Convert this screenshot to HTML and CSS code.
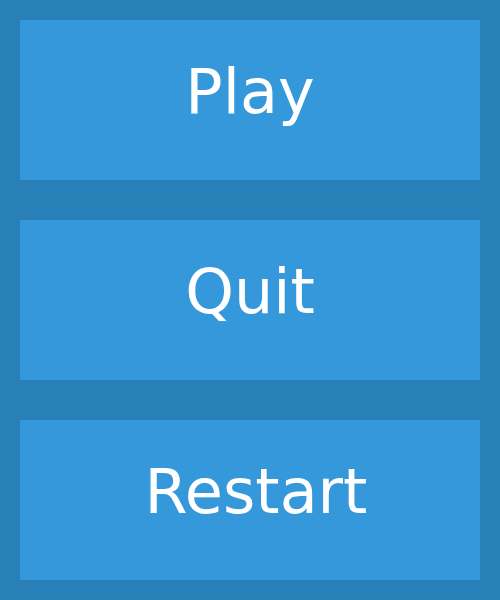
FILE: index.html
```html
<!DOCTYPE html>
<html>
<head>
<meta charset="utf-8">
<link rel="stylesheet" href="styles.css">
</head>
<body>
<div class="menu">
  <button class="btn">Play</button>
  <button class="btn">Quit</button>
  <button class="btn btn-restart">Restart</button>
</div>
</body>
</html>
```
FILE: styles.css
```css
html, body {
  margin: 0;
  padding: 0;
  width: 500px;
  height: 600px;
  background: #2980b9;
  overflow: hidden;
}
.menu {
  display: flex;
  flex-direction: column;
  gap: 40px;
  padding: 20px;
}
.btn {
  height: 160px;
  border: none;
  margin: 0;
  padding: 0 0 18px 0;
  background: #3498db;
  color: #fff;
  font-family: "DejaVu Sans", sans-serif;
  font-size: 62px;
  display: flex;
  align-items: center;
  justify-content: center;
}
.btn-restart {
  padding-left: 12px;
}
```
